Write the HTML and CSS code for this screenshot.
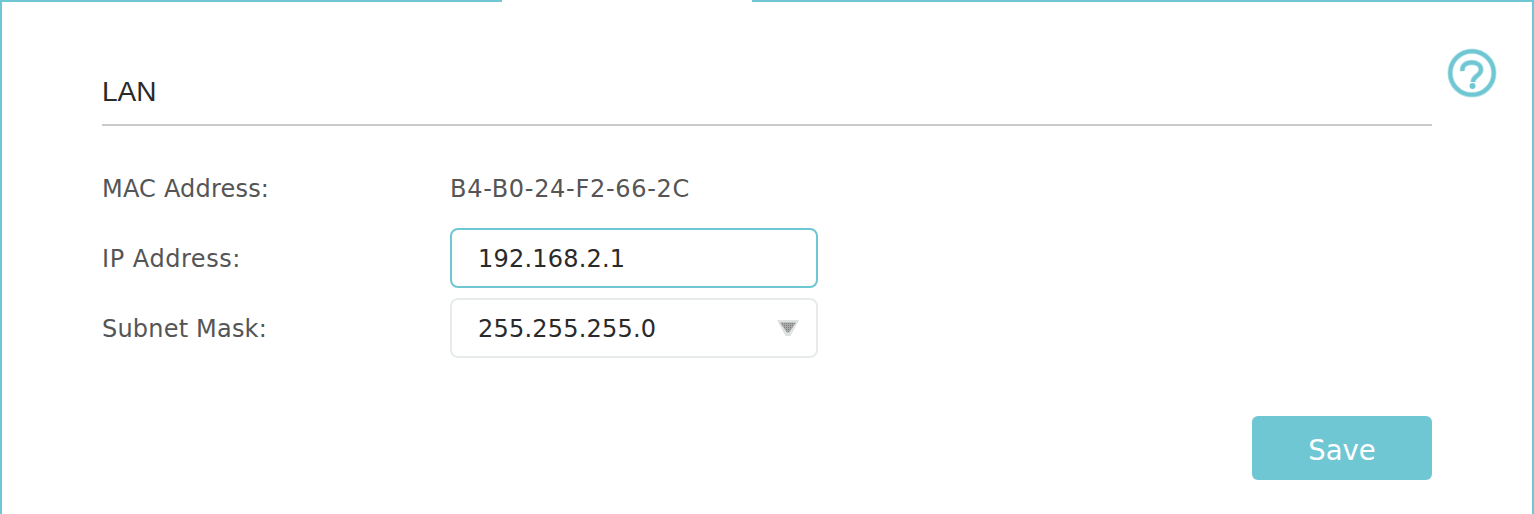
FILE: index.html
```html
<!DOCTYPE html>
<html lang="en">
<head>
<meta charset="utf-8">
<title>LAN</title>
<link rel="stylesheet" href="styles.css">
</head>
<body>
<main class="panel">
  <div class="top-edge"><span class="edge-left"></span><span class="edge-gap"></span><span class="edge-right"></span></div>
  <div class="content">
    <a class="help" href="#" aria-label="Help">
      <svg width="50" height="50" viewBox="0 0 50 50" fill="none">
        <circle cx="25" cy="25" r="21.800" stroke="#c4e7ec" stroke-width="5.600"/>
        <circle cx="25" cy="25" r="21.800" stroke="#6fc7d4" stroke-width="4"/>
        <path d="M15.500 23c-.8-5.500 3.500-8.500 9-8.500 5.700 0 9.500 2.800 9.500 7 0 3.300-2.300 5-4.500 6.700-2.300 1.800-3.500 3-3.500 5.800" stroke="#b5e1e8" stroke-width="5.400"/>
        <path d="M15.500 23c-.8-5.500 3.500-8.500 9-8.500 5.700 0 9.500 2.800 9.500 7 0 3.300-2.300 5-4.500 6.700-2.300 1.800-3.500 3-3.500 5.800" stroke="#6fc7d4" stroke-width="3.800"/>
        <circle cx="25.500" cy="38" r="3" fill="#6fc7d4"/>
      </svg>
    </a>
    <h1 class="title">LAN</h1>
    <form class="form">
      <div class="row"><span class="label">MAC Address:</span><span class="value">B4-B0-24-F2-66-2C</span></div>
      <div class="row"><label class="label label-ip" for="ip">IP Address:</label><input class="field field-active" id="ip" value="192.168.2.1"></div>
      <div class="row"><span class="label">Subnet Mask:</span>
        <div class="field select"><span>255.255.255.0</span>
          <svg class="arrow" width="24" height="18" viewBox="0 0 24 18">
            <defs>
              <pattern id="dots" width="2" height="2" patternUnits="userSpaceOnUse">
                <rect width="2" height="2" fill="#a8a8a8"/>
                <rect width="1" height="1" fill="#7f7f7f"/>
              </pattern>
            </defs>
            <polygon points="1,1 23,1 14.500,17 9.500,17" fill="#dfe2e2"/>
            <polygon points="4,3.500 20,3.500 13,13.500 11,13.500" fill="url(#dots)"/>
          </svg>
        </div>
      </div>
      <div class="actions"><button class="save" type="button">Save</button></div>
    </form>
  </div>
</main>
</body>
</html>
```
FILE: styles.css
```css
* { box-sizing: border-box; }
html, body { margin: 0; background: #fff; }
body { height: 514px; overflow: hidden; }
.panel {
  height: 514px;
  border-left: 2px solid #6fc7d4;
  border-right: 2px solid #6fc7d4;
  margin: 0;
  font-family: "DejaVu Sans", Verdana, sans-serif;
}
.top-edge { display: flex; height: 2px; }
.edge-left { width: 500px; background: #6fc7d4; }
.edge-gap { width: 250px; background: #fff; }
.edge-right { flex: 1; background: #6fc7d4; }
.content { position: relative; padding: 0 100px; }
.help { position: absolute; top: 46px; right: 35px; display: block; width: 50px; height: 50px; }
.help svg { display: block; }
.title {
  margin: 0;
  height: 124px;
  border-bottom: 2px solid #cacaca;
  padding-top: 72px;
  font: 400 28px/36px "Liberation Sans", Arial, sans-serif;
  color: #2a2a2a;
}
.form { display: flex; flex-direction: column; gap: 10px; padding-top: 32px; }
.row { display: flex; align-items: center; height: 60px; }
.label { width: 348px; padding-top: 2px; font-size: 24px; letter-spacing: 0.2px; color: #555; }
.label-ip { letter-spacing: 0.55px; }
.value { padding-top: 2px; font-size: 24px; letter-spacing: 0.7px; color: #555; }
.field {
  width: 368px;
  height: 60px;
  border-radius: 8px;
  border: 2px solid #e8ebeb;
  padding: 2px 26px 0;
  font: 24px "DejaVu Sans", Verdana, sans-serif;
  letter-spacing: 0.2px;
  color: #2a2a2a;
  background: #fff;
  outline: none;
}
.field-active { border-color: #6fc7d4; }
.select { display: flex; align-items: center; justify-content: space-between; padding-right: 16px; }
.arrow { display: block; margin-top: -2px; }
.actions { display: flex; justify-content: flex-end; padding-top: 48px; }
.save {
  width: 180px;
  height: 64px;
  border: 0;
  border-radius: 6px;
  background: #6fc7d4;
  color: #fff;
  font: 27.500px "DejaVu Sans", Verdana, sans-serif;
  padding-top: 4px;
}
```
